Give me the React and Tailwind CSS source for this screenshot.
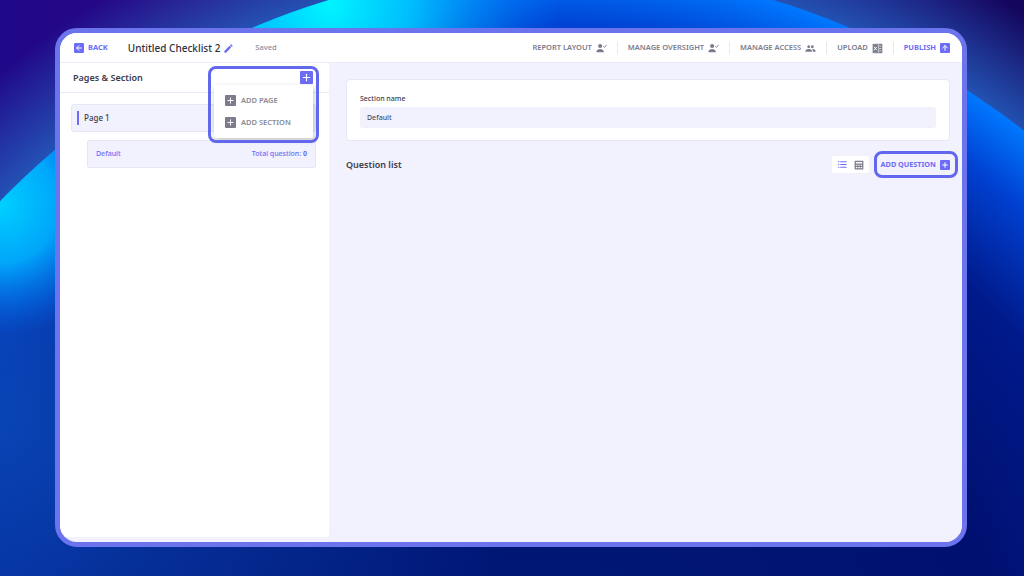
import { ArrowLeft, Plus, ArrowUp } from 'lucide-react'
import { MdEdit, MdPeople, MdFormatListBulleted } from 'react-icons/md'

const font = { fontFamily: '"Noto Sans", sans-serif' }

const SquareIcon = ({ icon: Icon, className }) => (
  <span className={`flex h-[10px] w-[10px] items-center justify-center rounded-[1px] text-white ${className}`}>
    <Icon size={8} strokeWidth={3} />
  </span>
)

const PersonCheckIcon = ({ className }) => (
  <svg className={className} width="11" height="10" viewBox="0 0 16 13" fill="currentColor">
    <circle cx="6" cy="3.6" r="3" />
    <path d="M0.5 12.5c0-3.2 3-4.6 5.5-4.6s5.500 1.400 5.500 4.600z" />
    <path d="M10.500 4l1.800 1.800 3.200-4" fill="none" stroke="currentColor" strokeWidth="1.300" />
  </svg>
)

const ExcelIcon = ({ className }) => (
  <svg className={className} width="11" height="11" viewBox="0 0 16 16">
    <rect x="5" y="1" width="10" height="14" rx="1" fill="currentColor" />
    <path d="M10.500 4.500h3M10.500 8h3M10.500 11.500h3" stroke="#fff" strokeWidth="1" />
    <rect x="0.500" y="1" width="9" height="14" rx="1" fill="currentColor" stroke="#fff" strokeWidth="0.800" />
    <path d="M3 5.500l4 5M7 5.500l-4 5" stroke="#fff" strokeWidth="1.400" />
  </svg>
)

const TableIcon = ({ className }) => (
  <svg className={className} width="10" height="10" viewBox="0 0 16 16" fill="currentColor">
    <path fillRule="evenodd" d="M2.500 1h11A1.500 1.500 0 0 1 15 2.500v11a1.500 1.500 0 0 1-1.500 1.500h-11A1.500 1.500 0 0 1 1 13.500v-11A1.500 1.500 0 0 1 2.500 1zM3 3v2.500h10V3zM3 7.500v1.500h2.500V7.500zM6.800 7.500v1.500h2.400V7.500zM10.500 7.500v1.500H13V7.500zM3 11v2h2.500v-2zM6.800 11v2h2.400v-2zM10.500 11v2H13v-2z" />
  </svg>
)

const Background = () => (
  <svg className="absolute inset-0 h-full w-full" viewBox="0 0 1024 576" preserveAspectRatio="none">
    <defs>
      <linearGradient id="sky" x1="0" y1="0" x2="1024" y2="0" gradientUnits="userSpaceOnUse">
        <stop offset="0" stopColor="#20088a" />
        <stop offset="0.2" stopColor="#2a0680" />
        <stop offset="0.8" stopColor="#1c0a70" />
        <stop offset="1" stopColor="#14065c" />
      </linearGradient>
      <radialGradient id="halo" cx="551" cy="732" r="860" gradientUnits="userSpaceOnUse">
        <stop offset="0.885" stopColor="#2458b8" stopOpacity="0.95" />
        <stop offset="1" stopColor="#2458b8" stopOpacity="0" />
      </radialGradient>
      <radialGradient id="dome" cx="551" cy="732" r="765" gradientUnits="userSpaceOnUse">
        <stop offset="0" stopColor="#001a78" />
        <stop offset="0.6" stopColor="#001070" />
        <stop offset="0.8" stopColor="#001a8c" />
        <stop offset="0.92" stopColor="#0040d0" />
        <stop offset="1" stopColor="#0078ff" />
      </radialGradient>
      <radialGradient id="crest" cx="330" cy="5" r="230" gradientUnits="userSpaceOnUse">
        <stop offset="0" stopColor="#00f4ff" />
        <stop offset="0.35" stopColor="#00c8ff" stopOpacity="0.9" />
        <stop offset="1" stopColor="#0080ff" stopOpacity="0" />
      </radialGradient>
      <radialGradient id="wedge" cx="0" cy="205" r="130" gradientUnits="userSpaceOnUse">
        <stop offset="0" stopColor="#00d0ff" />
        <stop offset="0.45" stopColor="#00b0ff" stopOpacity="0.9" />
        <stop offset="1" stopColor="#0070ff" stopOpacity="0" />
      </radialGradient>
      <radialGradient id="lift" cx="0" cy="420" r="520" gradientUnits="userSpaceOnUse">
        <stop offset="0" stopColor="#0a48b8" stopOpacity="0.9" />
        <stop offset="1" stopColor="#0a48b8" stopOpacity="0" />
      </radialGradient>
      <clipPath id="domeClip">
        <circle cx="551" cy="732" r="765" />
      </clipPath>
    </defs>
    <rect width="1024" height="576" fill="url(#sky)" />
    <circle cx="551" cy="732" r="860" fill="url(#halo)" />
    <circle cx="551" cy="732" r="765" fill="url(#dome)" />
    <g clipPath="url(#domeClip)">
      <rect width="1024" height="576" fill="url(#lift)" />
      <rect width="1024" height="576" fill="url(#crest)" />
      <rect width="1024" height="576" fill="url(#wedge)" />
    </g>
  </svg>
)

const NavItem = ({ label, icon: Icon }) => (
  <div className="flex items-center gap-[4px] border-r border-[#e8e8f5] pr-[10px]">
    <span className="text-[7.5px] font-semibold text-[#7c7c8c]">{label}</span>
    <Icon size={11} className="text-[#7c7c8c]" />
  </div>
)

const Header = () => (
  <header className="flex h-[30px] shrink-0 items-center justify-between border-b border-[#ebebf8] bg-white pl-[14px] pr-[12px] pt-[1px]">
    <div className="flex items-center">
      <SquareIcon icon={ArrowLeft} className="bg-[#6c6cf5]" />
      <span className="ml-[4px] text-[7.5px] font-bold text-[#6c6cf5]">BACK</span>
      <span className="ml-[20px] text-[10px] font-medium text-[#2e3040]">Untitled Checklist 2</span>
      <MdEdit size={11} className="ml-[3px] text-[#6c6cf5]" />
      <span className="ml-[21px] text-[7.5px] font-medium text-[#8c8c98]">Saved</span>
    </div>
    <div className="flex items-center gap-[10px]">
      <NavItem label="REPORT LAYOUT" icon={PersonCheckIcon} />
      <NavItem label="MANAGE OVERSIGHT" icon={PersonCheckIcon} />
      <NavItem label="MANAGE ACCESS" icon={MdPeople} />
      <NavItem label="UPLOAD" icon={ExcelIcon} />
      <div className="flex items-center gap-[4px]">
        <span className="text-[7.5px] font-bold text-[#6c6cf5]">PUBLISH</span>
        <SquareIcon icon={ArrowUp} className="bg-[#6c6cf5]" />
      </div>
    </div>
  </header>
)

const Sidebar = () => (
  <aside className="relative flex w-[269px] shrink-0 flex-col rounded-b-[3px] bg-white">
    <div className="flex h-[30px] shrink-0 items-center justify-between border-b border-[#ebebf8] pl-[13px] pr-[16px]">
      <span className="text-[9px] font-semibold text-[#3a3c4c]">Pages &amp; Section</span>
      <span className="flex h-[13px] w-[13px] items-center justify-center rounded-[1px] bg-[#6c6cf5] text-white">
        <Plus size={11} strokeWidth={2.5} />
      </span>
    </div>
    <div className="flex flex-col gap-[8px] pl-[11px] pr-[13px] pt-[11px]">
      <div className="flex h-[28px] items-center rounded-[3px] border border-[#e6e6f7] bg-[#f2f1fe] pl-[5px]">
        <span className="h-[14px] w-[2px] bg-[#6c6cf5]" />
        <span className="ml-[5px] text-[8px] font-medium text-[#3a3c4c]">Page 1</span>
      </div>
      <div className="ml-[16px] flex h-[28px] items-center justify-between rounded-[2px] border border-[#e6e6f7] bg-[#f2f1fe] px-[8px] pt-[1px]">
        <span className="text-[7px] font-medium text-[#6c6cf5]">Default</span>
        <span className="text-[7px] font-medium text-[#6c6cf5]">
          Total question: <b className="font-bold">0</b>
        </span>
      </div>
    </div>

    {/* Add menu */}
    <div className="absolute left-[154px] top-[22px] flex h-[53px] w-[99px] flex-col justify-center gap-[11px] rounded-[2px] bg-white pl-[11px] shadow-[1px_2px_5px_rgba(0,0,0,0.25)]">
      {['ADD PAGE', 'ADD SECTION'].map((label) => (
        <div key={label} className="flex h-[11px] items-center gap-[5px]">
          <span className="flex h-[11px] w-[11px] items-center justify-center rounded-[1px] bg-[#7c7c8c] text-white">
            <Plus size={9} strokeWidth={2.5} />
          </span>
          <span className="pt-[1px] text-[7.5px] font-semibold text-[#8a8a96]">{label}</span>
        </div>
      ))}
    </div>

    {/* Highlight */}
    <div className="absolute left-[148px] top-[3px] h-[77px] w-[111px] rounded-[8px] border-[3px] border-[#6268ee]" />
  </aside>
)

const Main = () => (
  <main className="flex min-w-0 flex-1 flex-col bg-[#f2f1fe] pl-[17px] pr-[12px] pt-[16px]">
    <div className="flex h-[62px] flex-col justify-end rounded-[4px] border border-[#e6e6f7] bg-white px-[13px] pb-[12px]">
      <span className="text-[7px] font-medium text-[#3a3c4c]">Section name</span>
      <div className="mt-[3px] flex h-[21px] items-center rounded-[3px] bg-[#f2f1fe] pl-[7px] pt-[1px] text-[7px] font-medium text-[#4c4e60]">
        Default
      </div>
    </div>
    <div className="relative mt-[10px] flex h-[27px] items-center justify-between">
      <span className="text-[9px] font-semibold text-[#3a3c4c]">Question list</span>
      <div className="flex items-center">
        <div className="flex h-[17px] w-[37px] items-center justify-center gap-[6px] rounded-[2px] bg-white">
          <MdFormatListBulleted size={11} className="text-[#6c6cf5]" />
          <TableIcon className="text-[#7c7c8c]" />
        </div>
        <div className="ml-[12px] flex items-center gap-[4px]">
          <span className="text-[7.25px] font-bold text-[#6c6cf5]">ADD QUESTION</span>
          <SquareIcon icon={Plus} className="bg-[#6c6cf5]" />
        </div>
      </div>
      <div className="absolute right-[-8px] top-0 h-[27px] w-[84px] rounded-[8px] border-[3px] border-[#6268ee]" />
    </div>
  </main>
)

export default function App() {
  return (
    <div className="relative h-[576px] w-[1024px] overflow-hidden" style={font}>
      <Background />
      <div className="relative pl-[55px] pt-[28px]">
        <div className="flex h-[519px] w-[912px] flex-col overflow-hidden rounded-[22px] border-[5px] border-[#6b74ec] bg-[#f2f1fe]">
          <Header />
          <div className="flex min-h-0 flex-1">
            <div className="flex shrink-0 pb-[5px]">
              <Sidebar />
            </div>
            <Main />
          </div>
        </div>
      </div>
    </div>
  )
}
